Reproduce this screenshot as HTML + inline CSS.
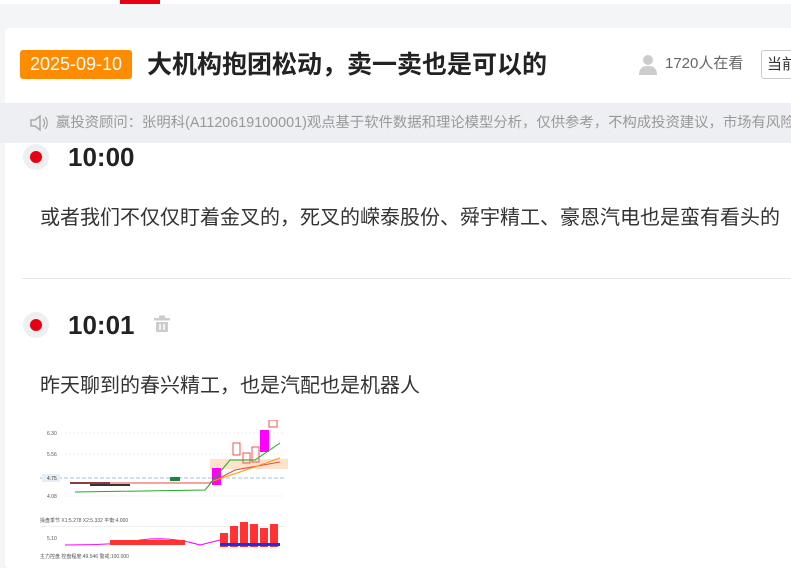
<!DOCTYPE html>
<html><head><meta charset="utf-8"><style>
*{margin:0;padding:0;box-sizing:border-box}
body{width:791px;height:560px;overflow:hidden;background:#f4f5f7;font-family:"Liberation Sans","Noto Sans CJK SC",sans-serif;position:relative}
.top{position:absolute;left:0;top:0;width:791px;height:4px;background:#fff}
.red{position:absolute;left:120px;top:0;width:40px;height:4px;background:#e60012}
.card{position:absolute;left:5px;top:28px;width:800px;height:540px;background:#fff;border-radius:4px}
.abs{position:absolute;white-space:nowrap}
.badge{left:20px;top:50px;width:112px;height:29px;background:#ff8c00;color:#fff;font-size:18px;line-height:29px;text-align:center;border-radius:3px}
.title{left:147px;top:48px;font-size:25px;font-weight:bold;color:#222;line-height:34px}
.watch{left:665px;top:54px;font-size:15px;color:#666;line-height:20px}
.btn{left:761px;top:50px;width:60px;height:29px;border:1px solid #ccc;border-radius:3px;font-size:15px;line-height:27px;padding-left:5px;color:#333;background:#fff}
.notice{left:0;top:103px;width:791px;height:40px;background:#eeeff2}
.ntext{left:56px;top:114px;font-size:14.35px;color:#999;line-height:18px}
.dot{width:26px;height:26px;border-radius:50%;background:#eeeff1}
.dot i{position:absolute;left:7px;top:7px;width:12px;height:12px;border-radius:50%;background:#e60012}
.time{font-size:26px;font-weight:bold;color:#222;line-height:30px}
.txt{font-size:20px;color:#333;line-height:24px}
</style></head><body>
<div class="top"></div><div class="red"></div>
<div class="card"></div>
<div class="abs badge">2025-09-10</div>
<div class="abs title">大机构抱团松动，卖一卖也是可以的</div>
<svg class="abs" style="left:638px;top:54px" width="20" height="22" viewBox="0 0 20 22"><circle cx="10" cy="6" r="5" fill="#ccc"/><path d="M1 21c0-7 4-9 9-9s9 2 9 9z" fill="#ccc"/></svg>
<div class="abs watch">1720人在看</div>
<div class="abs btn">当前</div>
<div class="abs notice"></div>
<svg class="abs" style="left:29px;top:114px" width="20" height="18" viewBox="0 0 20 18"><path d="M2 6h4l5-4v14l-5-4H2z" fill="none" stroke="#aaa" stroke-width="1.5"/><path d="M14 5c2 2 2 6 0 8M16 3c3 3 3 9 0 12" fill="none" stroke="#aaa" stroke-width="1.3"/></svg>
<div class="abs ntext">嬴投资顾问：张明科(A1120619100001)观点基于软件数据和理论模型分析，仅供参考，不构成投资建议，市场有风险</div>
<div class="abs dot" style="left:23px;top:144px"><i></i></div>
<div class="abs time" style="left:68px;top:142px">10:00</div>
<div class="abs txt" style="left:40px;top:206px">或者我们不仅仅盯着金叉的，死叉的嵘泰股份、舜宇精工、豪恩汽电也是蛮有看头的</div>
<div class="abs" style="left:22px;top:278px;width:780px;height:1px;background:#e8e8e8"></div>
<div class="abs dot" style="left:23px;top:312px"><i></i></div>
<div class="abs time" style="left:68px;top:310px">10:01</div>
<svg class="abs" style="left:153px;top:315px" width="18" height="18" viewBox="0 0 18 18"><rect x="1" y="3" width="16" height="2.5" fill="#ccc"/><rect x="6" y="0.5" width="6" height="2.5" fill="#ccc"/><path d="M3 7h12v10H3z" fill="#ccc"/><path d="M7 9v6M11 9v6" stroke="#fff" stroke-width="1.5"/></svg>
<div class="abs txt" style="left:40px;top:374px">昨天聊到的春兴精工，也是汽配也是机器人</div>
<svg class="abs" style="left:40px;top:420px" width="250" height="140" viewBox="0 0 250 140">
<rect width="250" height="140" fill="#fff"/>
<line x1="25" y1="13" x2="245" y2="13" stroke="#eee" stroke-dasharray="2 2"/>
<line x1="25" y1="34" x2="245" y2="34" stroke="#eee" stroke-dasharray="2 2"/>
<line x1="25" y1="76" x2="245" y2="76" stroke="#eee" stroke-dasharray="2 2"/>
<line x1="0" y1="58" x2="245" y2="58" stroke="#9cc3e8" stroke-dasharray="4 2"/>
<text x="7" y="15" font-size="5" fill="#555">6.30</text><text x="7" y="36" font-size="5" fill="#555">5.56</text>
<rect x="2" y="54" width="18" height="8" fill="#e8eef7"/><text x="7" y="60" font-size="5" fill="#333">4.75</text>
<text x="7" y="78" font-size="5" fill="#555">4.08</text>
<rect x="170" y="39" width="78" height="10" fill="#fde2cc"/>
<path d="M30 63h40M50 65h40" stroke="#333" stroke-width="2"/>
<rect x="130" y="57" width="10" height="4" fill="#1a8a3a"/>
<rect x="172" y="48" width="9" height="17" fill="#f0f"/>
<rect x="220" y="10" width="9" height="22" fill="#f0f"/>
<rect x="193" y="23" width="7" height="12" fill="none" stroke="#e55"/>
<rect x="203" y="33" width="7" height="10" fill="none" stroke="#e55"/>
<rect x="212" y="27" width="7" height="15" fill="none" stroke="#e55"/>
<rect x="229" y="0" width="8" height="7" fill="none" stroke="#e55"/>
<path d="M30 63 L170 63 L195 50 L240 42" stroke="#e44" fill="none"/>
<path d="M170 62 L200 52 L240 38" stroke="#f90" fill="none"/>
<path d="M35 72 L165 70 L190 40 L215 40 L240 23" stroke="#2a2" fill="none"/>
<text x="0" y="102" font-size="5" fill="#555">操盘季节 X1:5.278 X2:5.332 平衡:4.000</text>
<rect x="0" y="106" width="245" height="1" fill="#eee"/>
<text x="7" y="120" font-size="5" fill="#555">5.10</text>
<path d="M25 125 Q80 125 100 120 Q130 116 160 125 L180 120" stroke="#f0f" fill="none"/>
<rect x="70" y="120" width="75" height="5" fill="#f33"/>
<rect x="180" y="113" width="8" height="14" fill="#f33"/>
<rect x="190" y="106" width="8" height="21" fill="#f33"/>
<rect x="200" y="102" width="8" height="25" fill="#f33"/>
<rect x="210" y="104" width="8" height="23" fill="#f33"/>
<rect x="220" y="108" width="8" height="19" fill="#f33"/>
<rect x="230" y="104" width="8" height="23" fill="#f33"/>
<rect x="180" y="123" width="60" height="3" fill="#13f"/>
<text x="0" y="138" font-size="5" fill="#555">主力控盘 控盘程度:49.546 警戒:100.000</text>
</svg>
</body></html>
